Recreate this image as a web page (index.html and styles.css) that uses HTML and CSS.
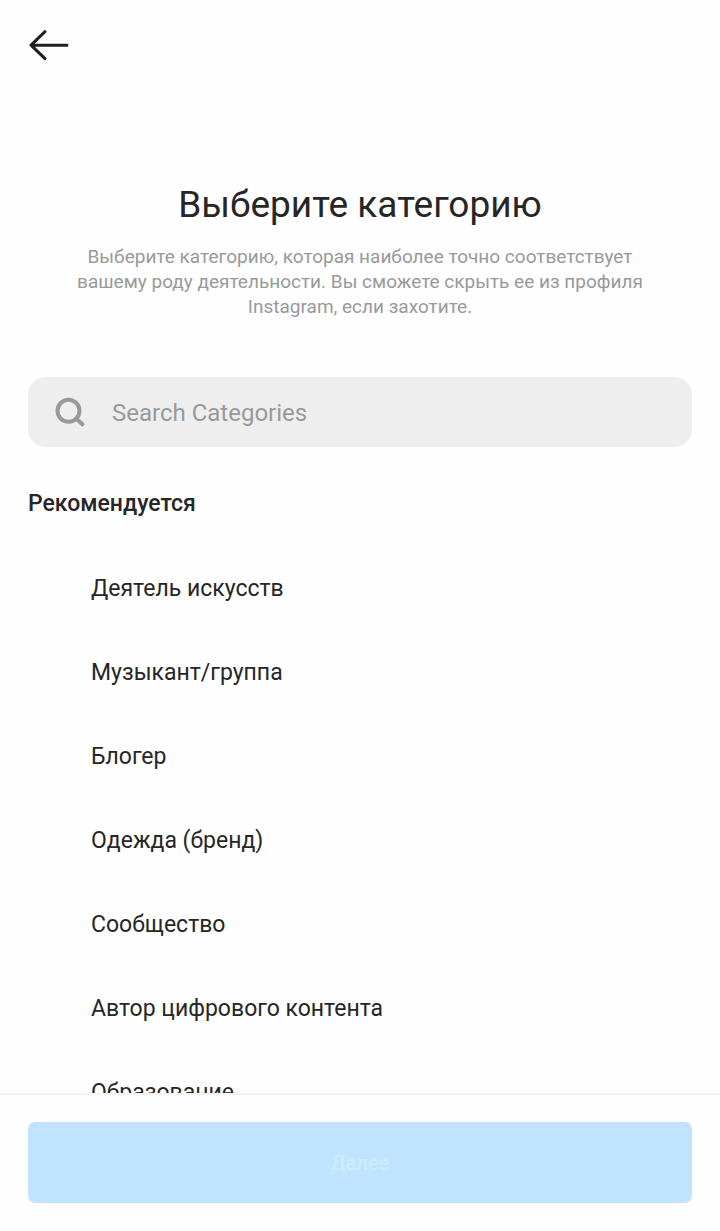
FILE: index.html
```html
<!DOCTYPE html>
<html lang="ru">
<head>
<meta charset="utf-8">
<meta name="viewport" content="width=device-width, initial-scale=1">
<title>Выберите категорию</title>
<link rel="stylesheet" href="styles.css">
</head>
<body>
<div class="screen">
  <header class="topbar">
    <button class="back" type="button" aria-label="Назад">
      <svg class="back-icon" viewBox="0 0 42 34" aria-hidden="true">
        <path d="M3 17.2H39M17 3.7L3 17.2L17 30.7"/>
      </svg>
    </button>
  </header>
  <main class="content">
    <section class="intro">
      <h1 class="title">Выберите категорию</h1>
      <p class="subtitle">Выберите категорию, которая наиболее точно соответствует вашему роду деятельности. Вы сможете скрыть ее из профиля Instagram, если захотите.</p>
    </section>
    <label class="search">
      <svg class="search-icon" viewBox="0 0 30 30" aria-hidden="true">
        <circle cx="13.5" cy="13.8" r="11"/>
        <path d="M21.2 21.5L27.3 27.3"/>
      </svg>
      <input class="search-input" type="search" placeholder="Search Categories" aria-label="Search Categories">
    </label>
    <h2 class="section-title">Рекомендуется</h2>
    <ul class="categories">
      <li><button class="category" type="button">Деятель искусств</button></li>
      <li><button class="category" type="button">Музыкант/группа</button></li>
      <li><button class="category" type="button">Блогер</button></li>
      <li><button class="category" type="button">Одежда (бренд)</button></li>
      <li><button class="category" type="button">Сообщество</button></li>
      <li><button class="category" type="button">Автор цифрового контента</button></li>
      <li><button class="category" type="button">Образование</button></li>
    </ul>
  </main>
  <footer class="footer">
    <button class="next" type="button" disabled>Далее</button>
  </footer>
</div>
</body>
</html>
```
FILE: styles.css
```css
* {
  box-sizing: border-box;
}

body {
  margin: 0;
  background: #fefefe;
  color: #262626;
  font-family: Roboto, "Noto Sans", sans-serif;
}

button,
input {
  border: 0;
  background: none;
  color: inherit;
  font: inherit;
}

.screen {
  display: flex;
  flex-direction: column;
  height: 100vh;
}

.topbar {
  display: flex;
  padding: 28px;
}

.back {
  display: flex;
  padding: 0;
}

.back-icon {
  width: 42px;
  height: 34px;
  fill: none;
  stroke: #202020;
  stroke-width: 3;
  stroke-linecap: round;
  stroke-linejoin: round;
}

.content {
  display: flex;
  flex: 1;
  flex-direction: column;
  min-height: 0;
  padding: 0 28px;
  overflow: hidden;
}

.intro {
  padding: 92px 40px 58px;
  text-align: center;
}

.title {
  margin: 0 0 16px;
  font-size: 37px;
  font-weight: 400;
  line-height: 46px;
}

.subtitle {
  margin: 0;
  color: #999;
  font-size: 19px;
  line-height: 25px;
}

.search {
  display: flex;
  flex: none;
  align-items: center;
  gap: 27px;
  height: 70px;
  padding: 0 27px;
  border-radius: 18px;
  background: #eee;
}

.search-icon {
  flex: none;
  width: 30px;
  height: 30px;
  fill: none;
  stroke: #999;
  stroke-width: 4;
  stroke-linecap: round;
}

.search-input {
  flex: 1;
  min-width: 0;
  padding: 2px 0 0;
  font-size: 24px;
  outline: none;
}

.search-input::placeholder {
  color: #999;
  opacity: 1;
}

.section-title {
  margin: 0;
  padding: 42px 0 27px;
  font-size: 23px;
  font-weight: 500;
  line-height: 30px;
}

.categories {
  margin: 0;
  padding: 0;
  list-style: none;
}

.category {
  display: block;
  width: 100%;
  height: 84px;
  padding: 0 63px;
  font-size: 23px;
  text-align: left;
}

.footer {
  flex: none;
  padding: 27px 28px 28px;
  border-top: 2px solid #f3f3f3;
}

.next {
  display: block;
  width: 100%;
  height: 81px;
  border-radius: 7px;
  background: #c0e4fd;
  color: #cfebff;
  font-size: 20px;
  font-weight: 500;
}
```
